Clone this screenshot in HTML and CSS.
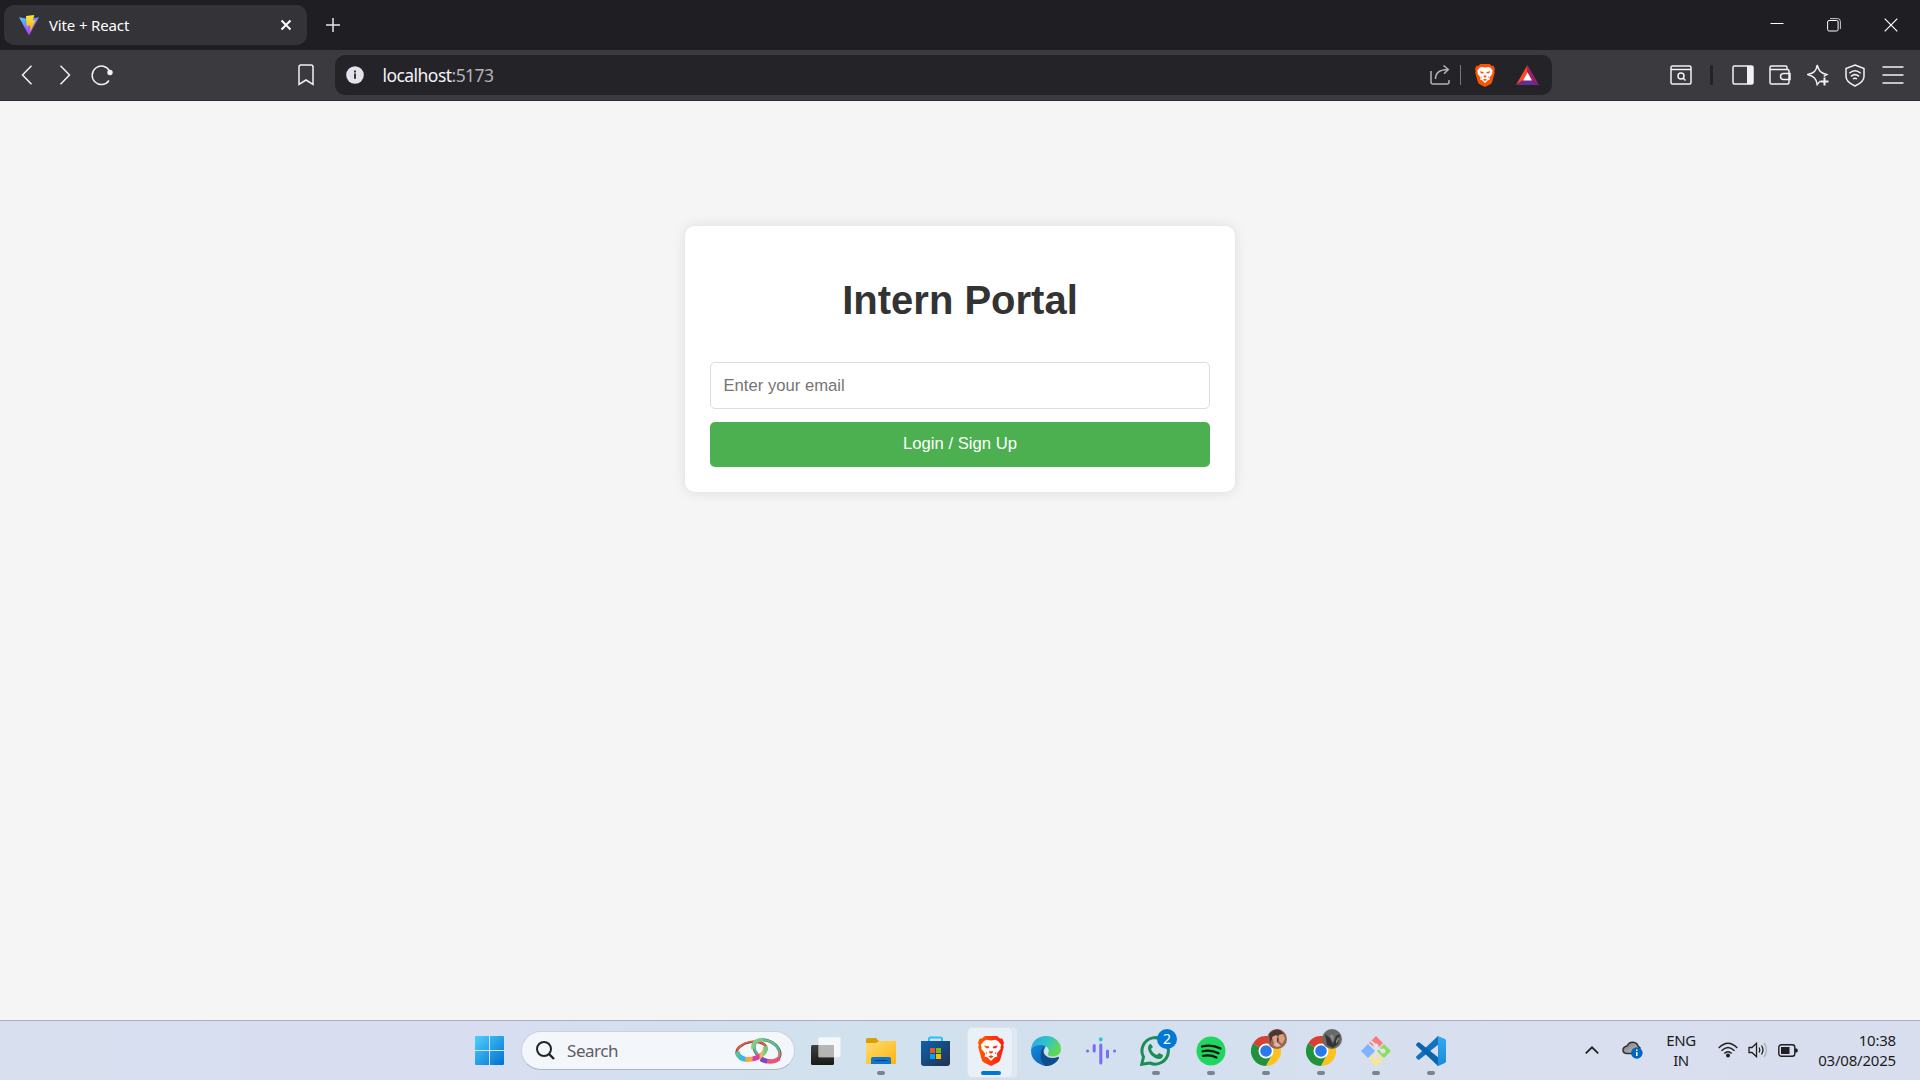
FILE: index.html
```html
<!DOCTYPE html>
<html lang="en">
<head>
<meta charset="utf-8">
<title>Vite + React</title>
<link rel="stylesheet" href="styles.css">
</head>
<body>
<svg width="0" height="0" class="defs">
  <defs>
    <linearGradient id="viteA" x1="0" y1="0" x2=".6" y2="1"><stop stop-color="#41d1ff"/><stop offset="1" stop-color="#bd34fe"/></linearGradient>
    <linearGradient id="viteB" x1="0" y1="0" x2="0" y2="1"><stop stop-color="#ffe83a"/><stop offset="1" stop-color="#ffa800"/></linearGradient>
    <linearGradient id="win" gradientUnits="userSpaceOnUse" x1="0" y1="0" x2="29" y2="29"><stop stop-color="#4fd0fd"/><stop offset="1" stop-color="#0070d0"/></linearGradient>
    <linearGradient id="dark" x1="0" y1="0" x2="0" y2="1"><stop stop-color="#3f3f3d"/><stop offset="1" stop-color="#191917"/></linearGradient>
    <linearGradient id="folder" x1="0" y1="0" x2="1" y2="1"><stop stop-color="#ffdd70"/><stop offset="1" stop-color="#fcb40d"/></linearGradient>
    <linearGradient id="store" x1="0" y1="0" x2="1" y2="1"><stop stop-color="#0c62b0"/><stop offset="1" stop-color="#24304f"/></linearGradient>
    <linearGradient id="brave" x1="0" y1="0" x2="1" y2="0"><stop stop-color="#ff5a00"/><stop offset="1" stop-color="#fb1d10"/></linearGradient>
    <linearGradient id="edgeTop" x1="0" y1="0" x2="1" y2=".5"><stop stop-color="#24a5e6"/><stop offset=".5" stop-color="#2fc2ce"/><stop offset="1" stop-color="#63d94f"/></linearGradient>
    <linearGradient id="edgeLow" x1="0" y1="0" x2="1" y2="1"><stop stop-color="#148be0"/><stop offset="1" stop-color="#0a59a4"/></linearGradient>
    <linearGradient id="ringA" x1="0" y1="0" x2="1" y2="0"><stop stop-color="#5cc48d"/><stop offset=".15" stop-color="#35b9e6"/><stop offset=".28" stop-color="#35b9e6"/><stop offset=".32" stop-color="#f7a548"/><stop offset=".52" stop-color="#f7a548"/><stop offset=".58" stop-color="#d83fa8"/><stop offset=".76" stop-color="#d83fa8"/><stop offset=".84" stop-color="#f5c050"/><stop offset="1" stop-color="#72c980"/></linearGradient>
    <linearGradient id="ringB" x1="0" y1="0" x2="1" y2="1"><stop stop-color="#6fc983"/><stop offset=".5" stop-color="#58b48a"/><stop offset=".65" stop-color="#e07a6a"/><stop offset="1" stop-color="#e8556f"/></linearGradient>
    <linearGradient id="code" x1="0" y1="0" x2="0" y2="1"><stop stop-color="#35a9ef"/><stop offset="1" stop-color="#1a8ad8"/></linearGradient>
    <linearGradient id="cloud" x1="0" y1="0" x2="1" y2="1"><stop stop-color="#777"/><stop offset="1" stop-color="#c9c9c9"/></linearGradient>
    <symbol id="lion" viewBox="0 0 26 30">
      <path d="M7 0h12l3 2.600 2.200-.2L26 6.600l-.8 2.700.6 1.800-3.400 12.200c-.5 1.600-1.100 2.400-2.300 3.200L13 30l-7.100-3.500c-1.200-.8-1.800-1.600-2.300-3.200L.2 11.100l.6-1.800L0 6.600l1.800-4.200 2.200.2z"/>
      <path fill="#fff" d="M8.500 3.800 13 4.600l4.500-.8L20 5l3.200 3.700-.7 2.200.2 1.800-3.900 4.800.5 3.200-2.600.6-3.700 3.700-3.700-3.700-2.600-.6.500-3.200-3.900-4.800.2-1.800L2.800 8.700 6 5z"/>
      <path d="m6 9.500 5 1 .2 1.700-3.200.1zM20 9.500l-5 1-.2 1.700 3.200.1zM11.800 14.500l1.200 1.200 1.200-1.200.8 2-2 1.300-2-1.300zM10.300 20.600l2.700-1.300 2.700 1.300-2.700 1.600zM7.500 15.200l1.700 2-.5 1.300zM18.500 15.200l-1.700 2 .5 1.300z"/>
    </symbol>
    <symbol id="chrome" viewBox="0 0 30 30">
      <path fill="#da3f32" d="M15 15 2 7.500A15 15 0 0 1 28 7.500L15 8z"/>
      <path fill="#22913e" d="M2 7.500A15 15 0 0 0 15 30l6.200-11.400L15 15z"/>
      <path fill="#fcc31e" d="M28 7.500A15 15 0 0 1 15 30l6.500-11.300L20 9l-5-1.500z"/>
      <circle cx="15" cy="15" r="7.500" fill="#fff"/><circle cx="15" cy="15" r="5.800" fill="#2b78e8"/>
    </symbol>
  </defs>
</svg>

<header class="tabstrip">
  <div class="tab">
    <svg width="20" height="20" viewBox="0 0 20 20"><path fill="url(#viteA)" d="M0 2.300 10 4l10-1.700L10.400 19.700h-.8z"/><path fill="url(#viteB)" d="M7 1 15.300 0l-1.500 5.500 2.800-.4-5.600 12 .4-6.900-3.700.7z"/></svg>
    <span class="tab-title">Vite + React</span>
    <svg class="tab-close" width="12" height="12" viewBox="0 0 12 12"><path d="m1.500 1.500 9 9m0-9-9 9" stroke="#fff" stroke-width="2"/></svg>
  </div>
  <svg class="new-tab" width="14" height="14" viewBox="0 0 14 14"><path d="M7 0v14M0 7h14" stroke="#e6e6e8" stroke-width="1.500"/></svg>
  <div class="window-buttons">
    <svg width="14" height="14" viewBox="0 0 14 14"><path d="M.5 5.500h13" stroke="#fff"/></svg>
    <svg width="14" height="14" viewBox="0 0 14 14" fill="none" stroke="#fff"><rect x=".6" y="2.500" width="10.500" height="10.500" rx="1.500"/><path d="M3 .6h7.500q2.900 0 2.900 2.900V11" stroke="#ccc"/></svg>
    <svg width="14" height="14" viewBox="0 0 14 14"><path d="m.7.700 12.600 12.600m0-12.600L.7 13.300" stroke="#fff" stroke-width="1.200"/></svg>
  </div>
</header>

<nav class="toolbar">
  <div class="cells">
    <span><svg width="12" height="20" viewBox="0 0 12 20"><path class="line" d="m10.500.8-9 9.200 9 9.200"/></svg></span>
    <span><svg width="12" height="20" viewBox="0 0 12 20"><path class="line" d="m1.500.8 9 9.200-9 9.200"/></svg></span>
    <span><svg width="22" height="22" viewBox="0 0 22 22"><path class="line" d="M18.500 7A9.200 9.200 0 1 0 18 16.500"/><circle cx="19" cy="8.500" r="2.700" fill="#f2f2f4"/></svg></span>
  </div>
  <svg class="bookmark" width="16" height="22" viewBox="0 0 16 22"><path class="line" d="M3 1h10q2 0 2 2v17.500L8 16l-7 4.500V3q0-2 2-2z"/></svg>
  <div class="omnibox">
    <svg width="18" height="18" viewBox="0 0 18 18"><circle cx="9" cy="9" r="8.800" fill="#e4e2ea"/><path d="M9 7.500v5.200M9 4.400v2" stroke="#36353b" stroke-width="2"/></svg>
    <span class="url">localhost<span class="port">:5173</span></span>
    <svg class="share" width="20" height="20" viewBox="0 0 20 20"><path d="M1 6v11q0 2 2 2h14q2 0 2-2v-2M5.500 14C5.500 8 10 4.500 18 4.500M13.500.5 18.300 4.500l-4.300 4.300" fill="none" stroke="#b3b2b8" stroke-width="1.500"/></svg>
    <i class="sep"></i>
    <svg class="shield" width="20" height="23"><use href="#lion"/></svg>
    <svg class="bat" width="23" height="20" viewBox="0 0 23 20"><path fill="#ff4724" d="M11.500 0v7.500L7.500 15 0 20z"/><path fill="#9e1f63" d="M11.500 0 23 20l-7.500-5-4-7.500z"/><path fill="#662d91" d="m0 20 7.500-5h8l7.500 5z"/><path fill="#fff" d="m11.500 7.300 4.500 8.200H7z"/></svg>
  </div>
  <div class="cells actions">
    <span><svg width="22" height="20" viewBox="0 0 22 20"><rect class="line" x="1" y="1" width="20" height="18" rx="1.500"/><path class="line" d="M1 4.500h20"/><circle class="line" cx="11" cy="11" r="3"/><path class="line" d="m13 13 2.500 2.500"/></svg></span>
    <i class="bar"></i>
    <span><svg width="22" height="20" viewBox="0 0 22 20"><rect class="line" x="1" y="1" width="20" height="18" rx="1.500"/><path fill="#f2f2f4" d="M15 1h6v18h-6z"/></svg></span>
    <span><svg width="22" height="20" viewBox="0 0 22 20"><path class="line" d="M18 4V2.500Q18 1 16.500 1H2.500Q1 1 1 2.500v15Q1 19 2.500 19h16q1.500 0 1.500-1.500V6q0-1.500-1.500-1.500H1M21 8.500h-6.500q-3 0-3 3t3 3H21z"/></svg></span>
    <span><svg width="22" height="22" viewBox="0 0 22 22"><path class="line" d="M13.500 17Q12 18 10.200 20.500 9.500 16 7.500 14T.8 10.500Q5.500 9.500 7.500 7.500T10.200 1q1.100 4.500 3.100 6.500t6.400 3l-3 1.800"/><path d="M17.500 13.500v8m-4-4h8" stroke="#f2f2f4" stroke-width="2"/></svg></span>
    <span><svg width="20" height="23" viewBox="0 0 20 23"><path class="line" d="m10 1 9 3.500v8q0 5.500-9 9.500-9-4-9-9.500v-8zM4.300 9.300q5.700-5 11.400 0M6 12.300q4-3.300 8 0"/><path class="line" d="M8 15q2-1.500 4 0"/></svg></span>
    <span><svg width="22" height="18" viewBox="0 0 22 18"><path class="line" d="M.5 1h21M.5 9h21M.5 17h21"/></svg></span>
  </div>
</nav>

<main class="page">
  <form class="card">
    <h1>Intern Portal</h1>
    <input type="email" placeholder="Enter your email">
    <button type="button">Login / Sign Up</button>
  </form>
</main>

<footer class="taskbar">
  <div class="app"><svg width="29" height="29" viewBox="0 0 29 29"><path fill="url(#win)" d="M1 0h13v14H0V1q0-1 1-1zM15 0h13q1 0 1 1v13H15zM0 15h14v14H1q-1 0-1-1zM15 15h14v13q0 1-1 1H15z"/></svg></div>
  <div class="search">
    <svg width="19" height="19" viewBox="0 0 19 19" fill="none" stroke="#242424" stroke-width="2"><circle cx="8" cy="8" r="7"/><path d="m13 13 5 5" stroke-width="2.400"/></svg>
    <span>Search</span>
    <svg class="rings" width="48" height="28" viewBox="0 0 48 28" fill="none">
      <ellipse cx="32" cy="13.500" rx="14" ry="9.500" transform="rotate(30 32 13.500)" stroke="#386a50" stroke-width="3"/>
      <ellipse cx="32" cy="13.500" rx="13.500" ry="9.500" transform="rotate(30 32 13.500)" stroke="url(#ringB)" stroke-width="2.200"/>
      <path d="M26 22q4 2.500 9 2.500 6 0 9-3" stroke="#e8557c" stroke-width="4.500"/>
      <path d="M26 21.800q2.500 1.800 6 2.500" stroke="#7548c4" stroke-width="4.500"/>
      <ellipse cx="16.500" cy="13.500" rx="15" ry="8.500" transform="rotate(-10 16.500 13.500)" stroke="#963e32" stroke-width="2.500"/>
      <ellipse cx="16.500" cy="13" rx="14.500" ry="8.500" transform="rotate(-10 16.500 13)" stroke="#e0664a" stroke-width="1.500"/>
      <path d="M2 15q2 7 10 7.500 11 0 17-7 2-3 1-6" stroke="url(#ringA)" stroke-width="4.800"/>
      <path d="M18 12q-1-9 10-9.500" stroke="#7dcd87" stroke-width="3.500"/>
    </svg>
  </div>
  <div class="app"><svg width="30" height="28" viewBox="0 0 30 28"><rect y="8" width="23" height="20" rx="1.500" fill="url(#dark)"/><rect x="7.500" y=".3" width="22" height="20" rx="1" fill="#fff" fill-opacity=".75"/><path fill="#a9a9a9" fill-opacity=".65" d="M7.500 8H23v12.300H7.500z"/></svg></div>
  <div class="app running"><svg width="30" height="28" viewBox="0 0 30 28"><path fill="#dc9b09" d="M1.500 1H10l3 3h16q1 0 1 1v5H0V2.500Q0 1 1.500 1z"/><path fill="url(#folder)" d="M0 6h10l3-2h17v23H0z"/><path fill="#0b75cf" d="M5 27v-5q0-2 2-2h16q2 0 2 2v5z"/><path d="M8.500 23.500h13" stroke="#063f73"/></svg></div>
  <div class="app"><svg width="29" height="30" viewBox="0 0 29 30"><path d="M8 6V3q0-1.500 1.500-1.500h10Q21 1.500 21 3v3" fill="none" stroke="#28c0f8" stroke-width="2"/><path fill="url(#store)" d="M0 5h29v22q0 3-3 3H3q-3 0-3-3z"/><path fill="#f25022" d="M9 12h5v5H9z"/><path fill="#7fba00" d="M15 12h5v5h-5z"/><path fill="#00a4ef" d="M9 18h5v5H9z"/><path fill="#ffb900" d="M15 18h5v5h-5z"/></svg></div>
  <div class="app active"><svg width="26" height="30" fill="url(#brave)"><use href="#lion"/></svg></div>
  <div class="app"><svg width="30" height="30" viewBox="0 0 30 30"><path fill="url(#edgeLow)" d="M.2 13C2 6 9 5 13 8c3 2 1 4 0 6-3 5 3 11 15 8-4 8-12 9-17 7C3 26-.7 20 .2 13z"/><path fill="#104d8b" d="M13 11c-6 4-3 17 2 19 5 0 11-4 13-8.500 0-.8-.7-.8-1.300-.5C19 24 10 20 13 11z"/><path fill="url(#edgeTop)" d="M.2 13C1 5 7 0 15 0c9 0 15 6.500 15 13 0 5-4 7.500-8 7.500-4.500 0-6-1.500-5-3 2.500-4-1-8.500-7-8.500-4 0-8 1.500-9.800 4z"/></svg></div>
  <div class="app"><svg width="30" height="28" viewBox="0 0 30 28" stroke="#7b6cf6" stroke-width="3" stroke-linecap="round"><path d="M1.500 14h.1M8.200 8.500v5.500M14.800 8v18M21.500 14v6M28.500 14h.1"/><path d="M14.800 2.200v.3" stroke="#1bcfe0" stroke-width="3.800"/></svg></div>
  <div class="app running"><svg width="31" height="30" viewBox="0 0 31 30"><path d="M1.700 28.300 3.500 21A13.200 13.200 0 1 1 10 27z" fill="none" stroke="#1d8d57" stroke-width="3"/><path fill="#1d8d57" d="M11 8c-2 0-3 2-3 4 0 5 6 11 11 11 3 0 4-2 4-4l-4-2-2 2c-3-1-5-3-6-6l2-2z"/></svg><b class="badge">2</b></div>
  <div class="app running"><svg width="30" height="30" viewBox="0 0 30 30"><circle cx="15" cy="15" r="14.500" fill="#1ed760"/><path d="M6 10.500q10-2.500 18.500 2M6.500 15.300q8.500-2 16 2M7 19.800q7.500-1.500 13.500 1.700" fill="none" stroke="#07160c" stroke-width="2.200" stroke-linecap="round"/></svg></div>
  <div class="app running"><svg width="30" height="30"><use href="#chrome"/></svg><svg class="avatar" width="20" height="20" viewBox="0 0 20 20"><circle cx="10" cy="10" r="10" fill="#9a6350"/><path fill="#4b3632" d="M2 5Q7-1 13 1l4 4-5 1-6 2-3 6z"/><path fill="#d9a184" d="m5 8 4-2 3 3-1 5-4 1zM12 6l4-1 2 5-3 5-3-3z"/><path fill="#d9bcab" d="m6 16 4-3 4 4-4 1z"/><path fill="#5b3b33" d="m10 8 2 2-1 4-1-1z"/></svg></div>
  <div class="app running"><svg width="30" height="30"><use href="#chrome"/></svg><svg class="avatar" width="20" height="20" viewBox="0 0 20 20"><circle cx="10" cy="10" r="10" fill="#696969"/><path fill="#353535" d="m3 5 5 4 3 6 3-8 4-2-2 10-5 4-6-3z"/><path fill="#8a8a8a" d="m9 5 3 2-1 6-3-5zM14 12l2-4 1 2-3 5z"/></svg></div>
  <div class="app running"><svg width="30" height="30" viewBox="0 0 30 30"><path fill="#fb7a7c" d="m15 0 7 7-4.500 4.500L15 9l-2 2-5-4z"/><path fill="#80b3ff" d="m7 8 7 7-7 7-7-7z"/><path fill="#8fdc5d" d="m23 8 7 7-7 7-7-7z"/><path fill="#ffe680" d="m15 16 7 7-7 7-7-7z"/><path d="m10 5 5 5v15M16 11l6 5" fill="none" stroke="#dce4ee" stroke-width="2"/><circle cx="15" cy="10" r="2.500" fill="#dce4ee"/><circle cx="22" cy="15" r="2.500" fill="#dce4ee"/><circle cx="15" cy="22" r="2.500" fill="#dce4ee"/></svg></div>
  <div class="app running"><svg width="30" height="30" viewBox="0 0 30 30"><path fill="#1272bd" d="m22 0 1 8L3.500 23.500q-1 .6-1.800-.1L.4 22q-.8-1 .1-1.800z"/><path fill="#0b64ad" d="m22 30 1-8L3.500 6.500q-1-.6-1.800.1L.4 8q-.8 1 .1 1.800z"/><path fill="url(#code)" d="m22 0 7 3q1 .5 1 1.700v20.600q0 1.200-1 1.700l-7 3q-1 .2-1.500-.5 1.500.5 1.500-1V1.500q0-1.500-1.500-1Q21-.2 22 0z"/></svg></div>

  <div class="tray">
    <svg class="chevron" width="14" height="8" viewBox="0 0 14 8"><path d="m.8 7.300 6.200-6 6.200 6" fill="none" stroke="#202020" stroke-width="1.700"/></svg>
    <svg class="onedrive" width="21" height="18" viewBox="0 0 21 18"><path d="M4.500 12.500Q1 12 1 9t4-4Q7 .8 11 1.200T16 5l2 2-6 5.500z" fill="url(#cloud)" stroke="#303030" stroke-width="1.500"/><circle cx="14.800" cy="12" r="5.800" fill="#0067c0"/><path d="M14.800 11v4M14.800 8.500v1.400" stroke="#fff" stroke-width="1.500"/></svg>
    <div class="lang">ENG<br>IN</div>
    <svg class="wifi" width="20" height="16" viewBox="0 0 20 16" fill="none" stroke="#202020" stroke-width="1.400"><path d="M.7 6q9.300-9.500 18.600 0M3.500 8.800q6.500-6.500 13 0M6.300 11.500q3.700-3.500 7.400 0"/><circle cx="10" cy="13.500" r="1.300" fill="#202020"/></svg>
    <svg class="volume" width="20" height="16" viewBox="0 0 20 16" fill="none" stroke="#202020" stroke-width="1.300"><path d="M1 5.500h3L8.500 1.300v13.400L4 10.500H1zM11 5.500q1.500 2.500 0 5M13.500 3.500q3 4.500 0 9"/><path d="M16 1q5 7 0 14" stroke="#adb2bd"/></svg>
    <svg class="battery" width="20" height="13" viewBox="0 0 20 13"><rect x=".8" y=".8" width="16" height="11.400" rx="2.500" fill="none" stroke="#202020" stroke-width="1.400"/><path fill="#202020" d="M3 3h8.500v7H3zM17 4.500h1.500q1.300 0 1.300 2t-1.300 2H17z"/></svg>
    <div class="clock">10:38<br>03/08/2025</div>
  </div>
</footer>
</body>
</html>
```
FILE: styles.css
```css
* { box-sizing: border-box; }
body {
  margin: 0;
  height: 1080px;
  overflow: hidden;
  display: flex;
  flex-direction: column;
  font-family: "Noto Sans", "Open Sans", sans-serif;
  background: #f5f5f5;
}
svg { display: block; flex: none; }
.defs { position: absolute; }
.line { fill: none; stroke: #f2f2f4; stroke-width: 1.5; }

.tabstrip {
  height: 50px;
  flex: none;
  background: #1f1e23;
  display: flex;
  align-items: center;
  padding-left: 4px;
}
.tab {
  width: 303px;
  height: 40px;
  border-radius: 10px;
  background: #343338;
  display: flex;
  align-items: center;
  padding: 0 15px;
  gap: 10px;
}
.tab-title { color: #fff; font-size: 15px; line-height: 20px; letter-spacing: -.15px; white-space: nowrap; }
.tab-close { margin-left: auto; }
.new-tab { margin-left: 19px; }
.window-buttons { margin-left: auto; display: flex; gap: 43px; padding-right: 22px; }

.toolbar {
  height: 51px;
  flex: none;
  background: #3b3a3f;
  border-bottom: 1px solid #2c2b30;
  display: flex;
  align-items: center;
  padding: 0 8.500px 0 8.500px;
}
.cells { display: flex; align-items: center; }
.cells span { width: 37.5px; display: flex; justify-content: center; }
.bookmark { margin-left: 177px; }
.omnibox {
  width: 1217px;
  height: 40px;
  margin-left: 20.5px;
  border-radius: 10px;
  background: #242328;
  display: flex;
  align-items: center;
  padding: 0 13px 0 11px;
}
.url { margin-left: 19px; color: #f4f3f7; font-size: 17.5px; line-height: 24px; letter-spacing: -.55px; }
.port { color: #b4b3b9; }
.share { margin-left: auto; }
.sep { width: 1px; height: 20px; background: #77767c; margin: 0 14px 0 10px; }
.shield { fill: #fb5204; }
.bat { margin-left: 21px; }
.actions { margin-left: auto; }
.bar { width: 3px; height: 20px; border-radius: 2px; background: #232227; margin: 0 11px 0 10px; }

.page { flex: 1; background: #f5f5f5; padding-top: 125px; }
.card {
  width: 550px;
  height: 266px;
  margin: 0 auto;
  padding: 25px;
  border-radius: 10px;
  background: #fff;
  box-shadow: 0 0 12.5px rgba(0, 0, 0, .1);
  display: flex;
  flex-direction: column;
  font-family: "Liberation Sans", Arial, sans-serif;
}
h1 { margin: 26px 0 39px; color: #333; font-size: 40px; line-height: 46px; text-align: center; }
input, button { width: 500px; border-radius: 5px; font-family: inherit; font-size: 16.67px; }
input { height: 47px; flex: none; padding: 0 12.5px; border: 1px solid #ddd; background: #fff; }
input::placeholder { color: #757575; }
button { height: 45px; flex: none; margin-top: 13px; padding: 0 0 2px; border: 0; color: #fff; background: #4caf50; }

.taskbar {
  height: 60px;
  flex: none;
  display: flex;
  align-items: center;
  padding-left: 462px;
  border-top: 1px solid #a5afbd;
  background: linear-gradient(90deg, #d8dfef 0, #d8def0 24%, #d1e1ee 43%, #d4e0ef 62%, #d9dfef 80%, #d9deee 100%);
}
.app { width: 55px; height: 58px; position: relative; display: flex; align-items: center; justify-content: center; }
.running::after, .active::after {
  content: "";
  position: absolute;
  left: 24px;
  bottom: 5px;
  width: 8px;
  height: 4px;
  border-radius: 2px;
  background: #7c838d;
}
.active::after { left: 18px; width: 20px; background: #0078d4; }
.active::before {
  content: "";
  position: absolute;
  left: 4px;
  top: 5px;
  width: 44px;
  height: 49px;
  border-radius: 5px;
  border: 1px solid #dce5ee;
  background: #e9f0f8;
  box-shadow: 4px 0 0 #dfe9f3;
}
.active svg { position: relative; }
.badge {
  position: absolute;
  top: 7px;
  left: 29px;
  width: 20px;
  height: 20px;
  border-radius: 50%;
  background: #0078d4;
  color: #fff;
  font-size: 14px;
  font-weight: 400;
  line-height: 20px;
  text-align: center;
}
.avatar { position: absolute; left: 29px; top: 7px; }
.search {
  width: 274px;
  height: 39px;
  margin: 0 3px 0 4px;
  border-radius: 20px;
  border: 1px solid #c9d2e1;
  border-bottom-color: #a9b6ca;
  background: #f3f6fb;
  display: flex;
  align-items: center;
  padding: 0 11px 0 14px;
}
.search span { margin-left: 12px; color: #5b5d61; font-size: 17px; letter-spacing: -.45px; }
.rings { margin-left: auto; }
.tray { margin-left: auto; padding: 0 24px 1px 0; display: flex; align-items: center; color: #1c1c1e; font-size: 15px; line-height: 20px; }
.onedrive { margin-left: 23px; }
.lang { margin-left: 23px; width: 30px; text-align: center; letter-spacing: -.4px; }
.wifi { margin-left: 22px; }
.volume { margin-left: 10px; }
.battery { margin-left: 10px; }
.clock { width: 98px; text-align: right; letter-spacing: -.2px; white-space: nowrap; }
```
